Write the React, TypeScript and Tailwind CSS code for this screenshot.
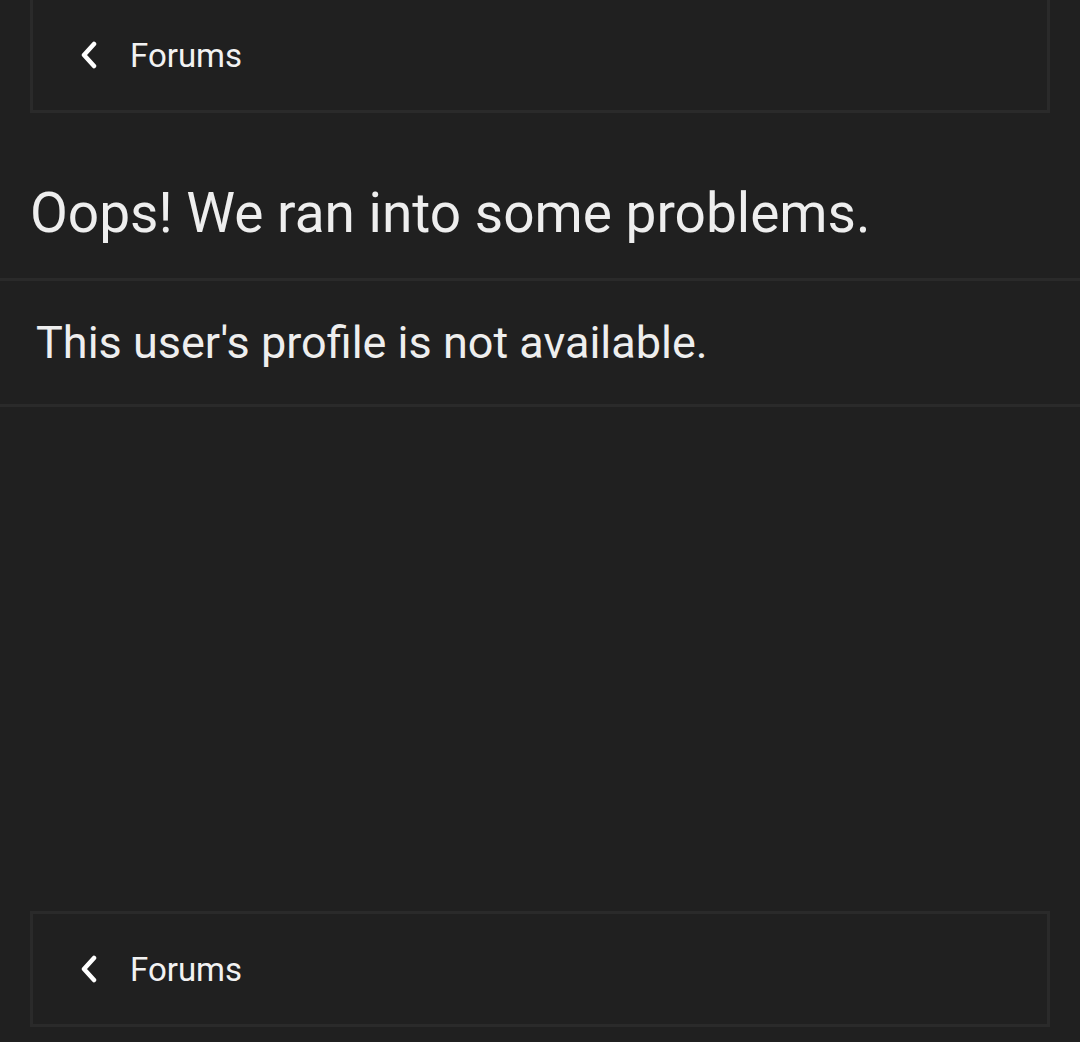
import React from "react";

function Chevron() {
  return (
    <svg width="20" height="28" viewBox="0 0 20 28" className="shrink-0">
      <path d="M15 3 L5 14 L15 25" fill="none" stroke="#ffffff" strokeWidth="4.5" strokeLinecap="round" strokeLinejoin="round" />
    </svg>
  );
}

function BackBox({ className = "" }: { className?: string }) {
  return (
    <div className={`mx-[30px] h-[116px] border-[3px] border-[#2a2a2a] flex items-center pl-[46px] ${className}`}>
      <Chevron />
      <span className="ml-[31px] text-[33px] text-[#f2f2f2] leading-none">Forums</span>
    </div>
  );
}

export default function App() {
  return (
    <div className="w-[1080px] h-[1042px] overflow-hidden bg-[#202020] flex flex-col" style={{ fontFamily: "Roboto, 'Noto Sans', sans-serif" }}>
      <BackBox className="-mt-[3px]" />
      <div className="h-[168px] border-b-[3px] border-[#2a2a2a] flex items-end pl-[30px] pb-[37px]">
        <h1 className="text-[55px] leading-none text-[#eeeeee] font-normal">Oops! We ran into some problems.</h1>
      </div>
      <div className="h-[126px] border-b-[3px] border-[#2a2a2a] flex items-center pl-[36px]">
        <p className="text-[45px] leading-none text-[#eeeeee]">This user's profile is not available.</p>
      </div>
      <div className="flex-1" />
      <BackBox className="mb-[15px]" />
    </div>
  );
}
